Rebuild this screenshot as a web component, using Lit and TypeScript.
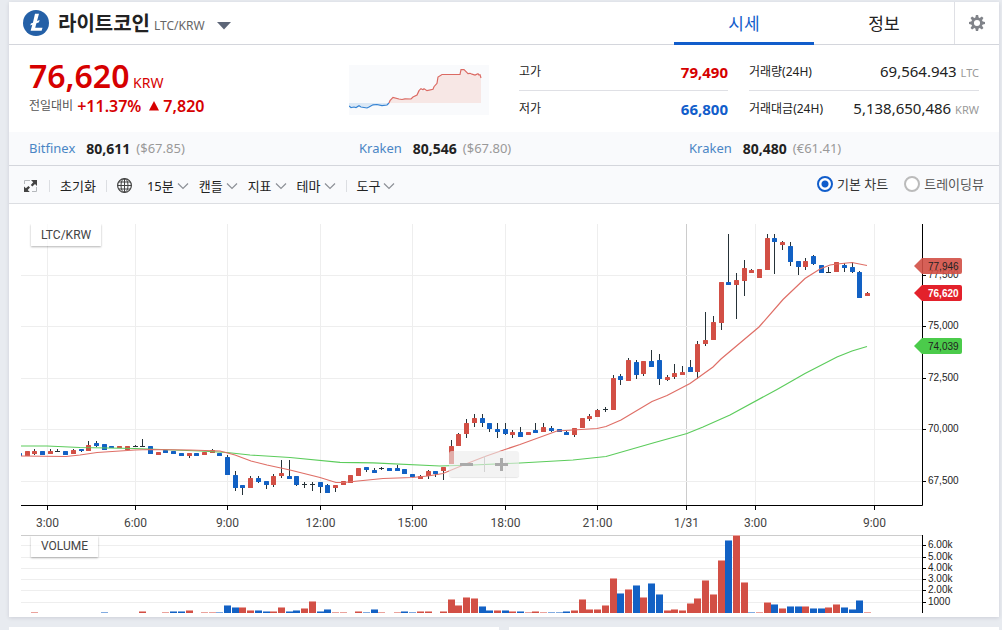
import { LitElement, html, svg, css } from "lit";
import { customElement, property, state } from "lit/decorators.js";
import { classMap } from "lit/directives/class-map.js";

type Candle = [number, number, number, number, number];

// Each row: direction (1 up, -1 down, 0 flat), high, body top, body bottom, low.
const CANDLES: Candle[] = [
  [-1, 453, 453, 456, 456], [1, 451, 451, 456, 456], [1, 449, 451, 454, 455],
  [-1, 451, 451, 455, 455], [1, 449, 451, 454, 454], [0, 449, 451, 452, 452],
  [-1, 451, 451, 455, 455], [1, 449, 450, 454, 454], [-1, 449, 449, 451, 452],
  [1, 441, 445, 451, 451], [-1, 441, 443, 446, 447], [-1, 444, 444, 450, 450],
  [-1, 446, 446, 448, 448], [1, 446, 446, 448, 448], [1, 446, 446, 450, 450],
  [0, 445, 446, 447, 447], [0, 439, 446, 447, 447], [-1, 446, 446, 454, 454],
  [1, 452, 452, 455, 455], [-1, 450, 450, 453, 453], [-1, 451, 451, 454, 454],
  [-1, 453, 453, 456, 456], [1, 453, 453, 456, 458], [-1, 453, 453, 456, 456],
  [1, 452, 452, 455, 455], [1, 449, 450, 453, 453], [-1, 453, 453, 456, 456],
  [-1, 455, 457, 475, 475], [-1, 471, 475, 488, 491], [-1, 485, 485, 488, 495],
  [1, 476, 478, 488, 488], [-1, 476, 478, 482, 483], [-1, 481, 481, 485, 489],
  [1, 474, 476, 485, 487], [1, 460, 473, 476, 478], [-1, 460, 476, 479, 479],
  [-1, 476, 476, 485, 486], [0, 482, 484, 485, 488], [0, 482, 484, 485, 491],
  [-1, 482, 482, 487, 493], [-1, 484, 485, 493, 493], [1, 485, 485, 488, 492],
  [1, 481, 481, 485, 485], [1, 475, 475, 483, 483], [1, 468, 468, 476, 476],
  [-1, 467, 467, 470, 472], [-1, 468, 470, 473, 473], [0, 467, 468, 469, 470],
  [-1, 468, 468, 471, 471], [-1, 465, 468, 471, 471], [-1, 469, 469, 474, 474],
  [-1, 474, 474, 477, 477], [1, 475, 476, 479, 479], [1, 470, 471, 476, 479],
  [-1, 471, 471, 474, 477], [1, 467, 467, 471, 480], [1, 440, 446, 464, 464],
  [1, 433, 434, 446, 446], [1, 419, 423, 434, 438], [1, 414, 418, 423, 427],
  [-1, 414, 418, 423, 427], [-1, 423, 423, 429, 432], [-1, 423, 429, 432, 438],
  [-1, 423, 429, 434, 435], [1, 430, 432, 435, 438], [-1, 427, 432, 437, 437],
  [1, 432, 432, 435, 435], [-1, 423, 430, 433, 433], [1, 423, 427, 432, 432],
  [-1, 426, 428, 431, 432], [-1, 429, 429, 432, 432], [-1, 431, 432, 435, 435],
  [1, 428, 428, 435, 437], [1, 418, 418, 428, 428], [1, 414, 416, 419, 421],
  [1, 409, 410, 417, 417], [0, 407, 409, 410, 412], [1, 375, 378, 410, 410],
  [-1, 374, 376, 380, 385], [1, 358, 360, 381, 381], [-1, 360, 362, 375, 379],
  [1, 361, 361, 374, 376], [-1, 350, 361, 367, 367], [-1, 354, 360, 379, 385],
  [1, 375, 377, 380, 381], [1, 364, 373, 377, 379], [1, 366, 372, 375, 375],
  [-1, 360, 367, 372, 372], [1, 341, 344, 372, 379], [1, 312, 340, 344, 346],
  [1, 316, 322, 340, 340], [1, 282, 282, 323, 330], [-1, 234, 282, 285, 285],
  [1, 273, 280, 285, 319], [1, 260, 268, 281, 296], [1, 269, 270, 273, 273],
  [1, 269, 269, 278, 278], [1, 234, 238, 270, 270], [-1, 234, 238, 242, 274],
  [1, 241, 242, 245, 250], [-1, 242, 246, 262, 266], [-1, 261, 261, 267, 275],
  [1, 258, 261, 267, 270], [-1, 255, 256, 264, 265], [-1, 265, 265, 273, 273],
  [0, 267, 272, 273, 273], [1, 262, 262, 272, 272], [-1, 263, 265, 268, 272],
  [-1, 262, 267, 272, 273], [-1, 271, 272, 298, 298], [1, 292, 293, 296, 296],
];

// Bar heights; a negative value is a bar that closed lower.
const VOLUMES = [
  0, 0, 1, 0, 0, 0, 0, 0, 0, 0, 0, -1, 0, 0, 0, 0, 2, 0, 0, 1, -2, -2, 3, 0, 1, 1, -1,
  -8, -6, 6, 3, -3, -2, 2, 6, -2, -3, 5, 12, -2, -4, 1, 1, 0, 2, -1, -4, 1, 0, 1, -2, -1,
  2, 2, 0, 2, 14, 8, 16, 15, -7, -3, 3, -3, 2, -2, 1, 2, 1, -1, -1, -2, 3, 14, 4, 4, 8,
  35, -20, 24, -28, 16, -30, -19, 3, 4, 3, 10, 15, 33, 19, 53, -73, 78, 31, -1, 1, 11, -9,
  5, -7, -7, 7, -5, -5, 6, 9, -6, -4, -13, 1,
];

const LAST_X = 867;
const STEP = 7.71;
const slotX = (index: number, count: number) => Math.round(LAST_X - (count - 1 - index) * STEP);

const MA_SHORT =
  "21,456 66,456.5 80,455 97,452.5 135,450 150,449.5 190,450 220,451 235,455 251,461 267,465 290,470 320,477.5 336,482.5 344,482.5 358,481 383,478.5 412,477.5 428,476 443,473.5 467,463.5 485,456.5 505,449.5 520,444.5 557,431 573,430 597,428.5 606,426.5 621,420 652,401.5 667,395.5 690,383.5 697,378.5 713,367 721,359 759,327 783,299.5 805,278.5 820,269 830,265 837,264 852,262.5 867,265.5";
const MA_LONG =
  "21,446 47,446 80,447.5 135,448.5 200,451 227,452.5 250,455 290,457.5 340,462.3 373,462.8 440,466 473,465 520,463 573,460 606,456.5 653,443 687,433.5 703,427 730,415 777,389.5 805,373.5 837,357 852,351 867,346.5";

const TIMES: [number, string][] = [
  [47, "3:00"], [135, "6:00"], [227, "9:00"], [320, "12:00"], [412, "15:00"],
  [505, "18:00"], [597, "21:00"], [686, "1/31"], [755, "3:00"], [874, "9:00"],
];
const PRICES: [number, string][] = [
  [275, "77,500"], [326, "75,000"], [378, "72,500"], [429, "70,000"], [481, "67,500"],
];
const VOLUME_TICKS: [number, string][] = [
  [545, "6.00k"], [557, "5.00k"], [568, "4.00k"], [579, "3.00k"], [590, "2.00k"], [602, "1000"],
];
const TAGS: [number, string, string][] = [
  [266, "77,946", "short"], [293, "76,620", "last"], [346, "74,039", "long"],
];

const chevron = html`<svg class="chevron" viewBox="0 0 12 8" width="12" height="8" aria-hidden="true">
  <path d="M1 1.5 6 6.5 11 1.5" fill="none" stroke="#8d9096" stroke-width="1.2" />
</svg>`;

@customElement("coin-header")
class CoinHeader extends LitElement {
  @state() private tab = "시세";

  static styles = css`
    :host { display: flex; height: 42px; border-bottom: 1px solid #d4d6dc; background: #fff; }
    .coin { flex: 1; display: flex; align-items: center; margin: 0; padding-left: 14px; font-size: 20px; color: #222; font-weight: 700; line-height: 42px; }
    .name { padding: 2px 0 0 9px; }
    .pair { font-size: 12px; font-weight: 400; color: #666; padding: 6px 0 0 4px; line-height: 20px; }
    button { font: inherit; border: 0; margin: 0; padding: 0; background: none; cursor: pointer; display: block; }
    .pick { margin: 6px 0 0 12px; }
    svg { display: block; }
    .tabs { display: flex; }
    .tab { box-sizing: border-box; width: 140px; height: 43px; padding-top: 3px; font-size: 17px; line-height: 37px; color: #222; border-bottom: 3px solid transparent; }
    .on { color: #115dcb; border-bottom-color: #115dcb; }
    .gear { width: 45px; border-left: 1px solid #dfe0e5; display: grid; place-items: center; }
  `;

  render() {
    return html`
      <h1 class="coin">
        <svg width="26" height="26" viewBox="0 0 26 26" aria-hidden="true">
          <circle cx="13" cy="13" r="13" fill="#2460a7" />
          <path fill="#fff" d="M12 3.8h4l-2 7.3 2.6-1-.6 2.1-2.600 1-1.200 4.500h7.300l-.9 3.100H7.600l1.700-6-2 .8.600-2.100 2-.8z" />
        </svg>
        <span class="name">라이트코인</span>
        <span class="pair">LTC/KRW</span>
        <button class="pick" aria-label="코인 선택">
          <svg width="14" height="8" viewBox="0 0 14 8"><path d="M0 0h14L7 7.500z" fill="#5d6678" /></svg>
        </button>
      </h1>
      <nav class="tabs">
        ${["시세", "정보"].map(
          (name) => html`<button class=${classMap({ tab: true, on: this.tab === name })} @click=${() => (this.tab = name)}>${name}</button>`
        )}
      </nav>
      <button class="gear" aria-label="설정">
        <svg width="16" height="16" viewBox="0 0 16 16">
          <g fill="#808389">
            ${[0, 45, 90, 135, 180, 225, 270, 315].map(
              (a) => svg`<path d="M6.300 3 6.900 0h2.200l.6 3z" transform="rotate(${a} 8 8)" />`
            )}
          </g>
          <circle cx="8" cy="8" r="4.400" fill="none" stroke="#808389" stroke-width="2.700" />
        </svg>
      </button>
    `;
  }
}

@customElement("price-summary")
class PriceSummary extends LitElement {
  static styles = css`
    :host { display: grid; grid-template-columns: 320fr 140px 239fr 251fr; align-items: start; padding: 0 20px; height: 87px; background: #fff; color: #222; }
    p { margin: 0; }
    .price { padding-top: 11px; font-size: 32px; line-height: 40px; height: 40px; font-weight: 600; color: #d60000; }
    .unit { font-size: 14px; font-weight: 400; }
    .change { display: flex; align-items: center; line-height: 20px; font-size: 12px; color: #555; }
    .rate { font-size: 16px; font-weight: 600; color: #d60000; }
    .first-rate { padding-left: 4px; }
    .arrow { margin: 0 4px 0 8px; }
    .spark { display: block; margin-top: 20px; background: #f9fafc; }
    dl { margin: 0; padding-top: 9px; }
    .first { margin-left: 30px; }
    .second { margin-left: 21px; }
    .row { display: flex; justify-content: space-between; align-items: center; height: 36px; }
    .row + .row { border-top: 1px solid #dfe0e5; }
    dt { font-size: 12px; line-height: 20px; }
    dd { margin: 0; font-size: 15px; line-height: 20px; }
    .high, .low { font-weight: 700; color: #d60000; }
    .low { color: #115dcb; }
    small { font-size: 11px; color: #999; }
  `;

  render() {
    return html`
      <div>
        <p class="price">76,620<span class="unit"> KRW</span></p>
        <p class="change">
          전일대비 <span class="rate first-rate">+11.37%</span>
          <svg class="arrow" width="10" height="10" viewBox="0 0 10 10" aria-label="상승"><path d="M5 0 10 9.500H0z" fill="#d60000" /></svg>
          <span class="rate">7,820</span>
        </p>
      </div>
      <svg class="spark" width="140" height="50" viewBox="0 0 140 50" role="img" aria-label="시세 추이">
        <path d="M0 38V41L5 42 10 41 18 43 24 40 33 40.700 38 40 40 38z" fill="#dbe8f5" />
        <path d="M40 38 41 35.700 44 32.500 50 34H62L68 30 70 25.700 78 25.500 84 24.500 88 18.500 89 12 93 9.500H111L112 5H115L118 8 123 9 129 9 132 12V38z" fill="#f7e7e5" />
        <path d="M0 41 2 42.500 5 42 7 42.500 10 40.800 12 42 18 43 20 42 24 39.800 28 39.500 33 40.700 38 40 40 38" fill="none" stroke="#3583d3" stroke-width="1.200" />
        <path d="M40 38 41 35.700 44 32.400 50 34 53 34.500 56 33.800 62 34 64 32 68 30 70 25.700 72 23.700 74 24.700 75 23.700 78 25.700 84 24.300 85 21.700 88 18.300 89 12 93 9.500H111L112 4.700H115L118 7.700 119 8.700 121 8.300 123 9.200 126 10 129 8.700 130 10 131 9.700 132 13" fill="none" stroke="#db6a63" stroke-width="1.200" />
      </svg>
      <dl class="first">
        <div class="row"><dt>고가</dt><dd class="high">79,490</dd></div>
        <div class="row"><dt>저가</dt><dd class="low">66,800</dd></div>
      </dl>
      <dl class="second">
        <div class="row"><dt>거래량(24H)</dt><dd>69,564.943 <small>LTC</small></dd></div>
        <div class="row"><dt>거래대금(24H)</dt><dd>5,138,650,486 <small>KRW</small></dd></div>
      </dl>
    `;
  }
}

@customElement("exchange-strip")
class ExchangeStrip extends LitElement {
  static styles = css`
    :host { display: grid; grid-template-columns: repeat(3, 1fr); height: 33px; line-height: 33px; background: #f9fafc; border-bottom: 1px solid #d4d6dc; font-size: 13px; }
    .item { display: flex; padding-left: 20px; }
    a { color: #4a86c5; text-decoration: none; }
    b { color: #222; font-size: 14px; padding: 0 6px 0 11px; }
    span { color: #999; }
  `;

  render() {
    return [
      ["Bitfinex", "80,611", "($67.85)"],
      ["Kraken", "80,546", "($67.80)"],
      ["Kraken", "80,480", "(€61.41)"],
    ].map(([name, price, foreign]) => html`<div class="item"><a href="#">${name}</a><b>${price}</b><span>${foreign}</span></div>`);
  }
}

@customElement("chart-toolbar")
class ChartToolbar extends LitElement {
  static styles = css`
    :host { display: flex; justify-content: space-between; align-items: center; height: 37px; padding: 0 15px; background: #f9fafc; border-bottom: 1px solid #dcdee2; font-size: 13px; color: #222; }
    .tools, .modes { display: flex; align-items: center; }
    button { display: flex; align-items: center; gap: 3px; margin: 0; padding: 0; border: 0; background: none; font: inherit; line-height: 20px; color: inherit; cursor: pointer; }
    .tools { gap: 10px; padding-top: 2px; }
    .bar { width: 1px; height: 12px; background: #dcdee2; }
    .expand { padding-right: 2px; }
    .globe { padding-right: 5px; }
    .modes { gap: 16px; padding-bottom: 2px; }
    label { display: flex; align-items: center; gap: 4px; line-height: 20px; color: #555; }
    .chosen { color: #333; }
    input { appearance: none; box-sizing: border-box; width: 16px; height: 16px; margin: 0; border: 2px solid #bbb; border-radius: 50%; background: #fff; }
    input:checked { border-color: #115dcb; background: radial-gradient(circle, #115dcb 3px, #fff 4px); }
    svg { display: block; }
  `;

  @state() private mode = "기본 차트";

  render() {
    const menu = (name: string) => html`<button aria-haspopup="menu">${name}${chevron}</button>`;
    return html`
      <div class="tools">
        <button class="expand" aria-label="전체 화면">
          <svg width="13" height="12" viewBox="0 0 13 12">
            <path d="M.500 4V.500H6M.500 8v3.500H5M12.500 7v4.500H8" fill="none" stroke="#b5b8bc" />
            <path d="M7 0h6v6l-2-2-2.600 2.400-1.600-1.500L9.200 2.200zM0 12V6.500l1.900 1.800 2.600-2.400L6 7.400 3.700 9.900 5.800 12z" fill="#444" />
          </svg>
        </button>
        <span class="bar"></span>
        <button>초기화</button>
        <span class="bar"></span>
        <button class="globe" aria-label="시간대">
          <svg width="15" height="15" viewBox="0 0 15 15" fill="none" stroke="#444">
            <circle cx="7.500" cy="7.500" r="6.900" stroke-width="1.200" />
            <ellipse cx="7.500" cy="7.500" rx="3.500" ry="6.900" />
            <path d="M7.500.500v14M.500 7.500h14M1.500 4h12M1.500 11h12" />
          </svg>
        </button>
        ${menu("15분")}${menu("캔들")}${menu("지표")}${menu("테마")}
        <span class="bar"></span>
        ${menu("도구")}
      </div>
      <div class="modes">
        ${["기본 차트", "트레이딩뷰"].map(
          (name) => html`<label class=${classMap({ chosen: this.mode === name })}>
            <input type="radio" name="mode" .checked=${this.mode === name} @change=${() => (this.mode = name)} />${name}
          </label>`
        )}
      </div>
    `;
  }
}

@customElement("candle-chart")
class CandleChart extends LitElement {
  @property({ attribute: false }) candles = CANDLES;
  @property({ attribute: false }) volumes = VOLUMES;

  static styles = css`
    :host { display: block; position: relative; background: #fff; }
    .plot { display: block; width: 100%; height: auto; font: 12px Roboto, "Liberation Sans", sans-serif; }
    .grid { stroke: #eee; }
    .day, .split { stroke: #ccc; }
    .axis { stroke: #000; fill: none; }
    .wick { stroke: #263238; }
    .up { fill: #d24f45; }
    .down { fill: #1261c4; }
    .upcap { fill: #eaa39d; }
    .downcap { fill: #82abe0; }
    .mashort, .malong { fill: none; stroke: #df6f67; stroke-width: 1.2; }
    .malong { stroke: #5ccc5c; }
    .time { text-anchor: middle; fill: #444; }
    .tick { font: 10px "Liberation Sans", Arial, sans-serif; fill: #222; }
    .short { fill: #d24f45; fill-opacity: 0.9; }
    .last { fill: #e3212b; }
    .long { fill: #4bcb4b; }
    .bold { font-weight: 700; fill: #fff; }
    .legend { position: absolute; left: 22px; padding: 0 10px; line-height: 22px; font-size: 12px; font-family: Roboto, sans-serif; color: #444; background: rgba(255, 255, 255, 0.7); box-shadow: 0 1px 2px rgba(0, 0, 0, 0.3); clip-path: inset(0 -3px -3px -3px); }
    .pricelegend { top: 20px; }
    .volumelegend { bottom: 60px; line-height: 21px; }
    .zoom { position: absolute; left: 48%; bottom: 140px; transform: translateX(-50%); display: flex; align-items: center; width: 70px; height: 26px; border-radius: 3px; background: rgba(235, 235, 235, 0.6); box-shadow: 0 1px 1px rgba(0, 0, 0, 0.1); }
    .zoom button { flex: 1; height: 26px; border: 0; padding: 0; background: none; display: grid; place-items: center; }
    .zoom i { width: 1px; height: 16px; background: #d2d2d2; }
  `;

  private candle([dir, high, top, bottom, low]: Candle, i: number) {
    const x = slotX(i, this.candles.length);
    return svg`
      <path class="wick" d="M${x + 0.5} ${high}V${low}" />
      ${dir === 0
        ? svg`<path class="wick" d="M${x - 2} ${top + 0.5}h5" />`
        : svg`<rect class=${dir > 0 ? "up" : "down"} x=${x - 2} y=${top} width="5" height=${bottom - top} rx="0.5" />`}
    `;
  }

  private volume(value: number, i: number) {
    if (!value) return null;
    const x = slotX(i, this.volumes.length) - 3;
    const size = Math.abs(value);
    const kind = value > 0 ? "up" : "down";
    return svg`
      <rect class="${kind}cap" x=${x} y=${613 - size} width="7" height="1" />
      <rect class=${kind} x=${x} y=${614 - size} width="7" height=${size - 1} />
    `;
  }

  render() {
    return html`
      <svg class="plot" viewBox="9 204 990 413" role="img" aria-label="LTC/KRW 차트">
        <defs><clipPath id="area"><rect x="21" y="204" width="901" height="413" /></clipPath></defs>
        ${TIMES.map(([x, t]) => svg`<path class=${t === "1/31" ? "day" : "grid"} d="M${x + 0.5} 224V505" />`)}
        ${[...PRICES, ...VOLUME_TICKS].map(([y]) => svg`<path class="grid" d="M21 ${y + 0.5}H922" />`)}
        <path class="split" d="M21 535.500H922" />
        <g clip-path="url(#area)">
          ${this.candles.map((c, i) => this.candle(c, i))}
          ${this.volumes.map((v, i) => this.volume(v, i))}
          <polyline class="malong" points=${MA_LONG} />
          <polyline class="mashort" points=${MA_SHORT} />
        </g>
        <path class="axis" d="M21 505.500H922.500V224M922.500 535V613" />
        ${TIMES.map(([x, t]) => svg`<path class="axis" d="M${x + 0.5} 505v5" /><text class="time" x=${x + 0.5} y="527">${t}</text>`)}
        ${[...PRICES, ...VOLUME_TICKS].map(
          ([y, t]) => svg`<path class="axis" d="M922 ${y + 0.5}h4" /><text class="tick" x="928" y=${y + 3}>${t}</text>`
        )}
        ${TAGS.map(
          ([y, t, kind]) => svg`
            <path class=${kind} d="M914 ${y}l8-8h38q2 0 2 2v12q0 2-2 2h-38z" />
            <text class="tick ${kind === "last" ? "bold" : ""}" x="928" y=${y + 4}>${t}</text>`
        )}
      </svg>
      <div class="legend pricelegend">LTC/KRW</div>
      <div class="legend volumelegend">VOLUME</div>
      <div class="zoom">
        <button aria-label="축소"><svg width="13" height="13" viewBox="0 0 13 13"><path d="M0 5h13v3H0z" fill="#aaa" /></svg></button>
        <i></i>
        <button aria-label="확대"><svg width="13" height="13" viewBox="0 0 13 13"><path d="M5 0h3v5h5v3H8v5H5V8H0V5h5z" fill="#aaa" /></svg></button>
      </div>
    `;
  }
}

@customElement("app-root")
class AppRoot extends LitElement {
  static styles = css`
    :host { display: block; box-sizing: border-box; height: 100vh; overflow: hidden; padding: 2px 3px 0 9px; background: #e8ebf0; font-family: "Noto Sans", "Noto Sans CJK KR", sans-serif; }
    .panel { box-shadow: 0 1px 4px rgba(0, 0, 40, 0.12); }
    .below { display: grid; grid-template-columns: 490fr 490fr; gap: 10px; padding-top: 10px; }
    .card { background: #fff; min-height: 40px; }
  `;

  render() {
    return html`
      <main class="panel">
        <coin-header></coin-header>
        <price-summary></price-summary>
        <exchange-strip></exchange-strip>
        <chart-toolbar></chart-toolbar>
        <candle-chart></candle-chart>
      </main>
      <div class="below">
        <section class="card"></section>
        <section class="card"></section>
      </div>
    `;
  }
}
